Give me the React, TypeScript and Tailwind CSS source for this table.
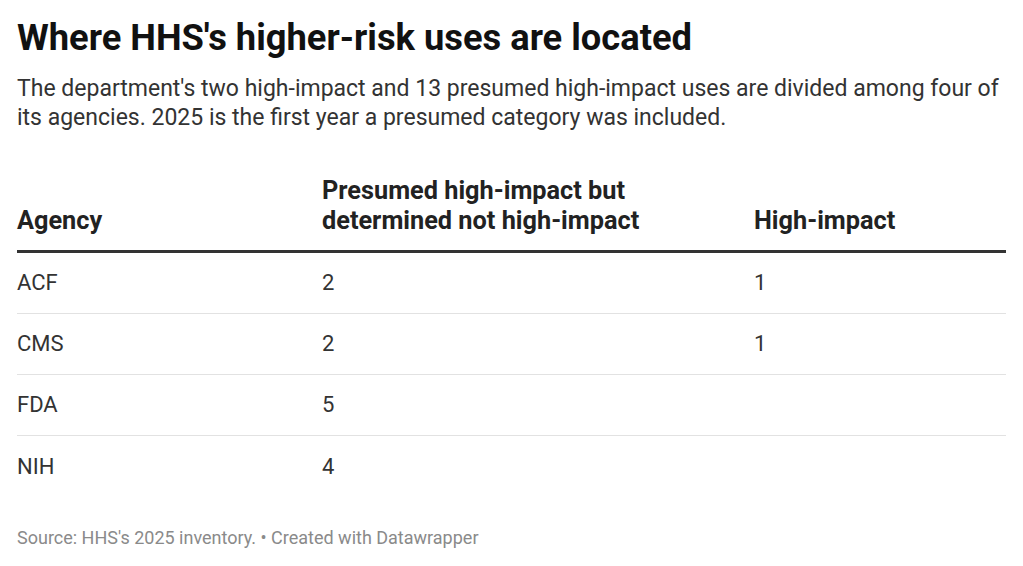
const rows: [string, string, string][] = [
  ["ACF", "2", "1"],
  ["CMS", "2", "1"],
  ["FDA", "5", ""],
  ["NIH", "4", ""],
];

export default function App() {
  return (
    <div className="h-[566px] w-[1023px] bg-white px-[17px] pt-[17px] font-['Roboto',sans-serif] text-[#333333]">
      <h1 className="text-[36.3px] font-bold leading-[42px] text-[#111111]">
        Where HHS's higher-risk uses are located
      </h1>
      <p className="mt-[15px] text-[23px] leading-[29px] text-[#333333]">
        The department's two high-impact and 13 presumed high-impact uses are divided among four of its agencies. 2025 is the first year a presumed category was included.
      </p>

      <div className="mt-[44px]">
        <div className="grid grid-cols-[305px_432px_1fr] items-end border-b-[3px] border-[#333333] pb-[14px] text-[25.3px] font-bold leading-[30px] text-[#222222]">
          <div>Agency</div>
          <div>
            Presumed high-impact but
            <br />
            determined not high-impact
          </div>
          <div>High-impact</div>
        </div>
        {rows.map(([agency, presumed, high], i) => (
          <div
            key={agency}
            className={
              i < rows.length - 1
                ? "grid h-[61px] grid-cols-[305px_432px_1fr] items-center border-b border-[#e2e2e2] text-[22px] leading-[28px]"
                : "grid h-[61px] grid-cols-[305px_432px_1fr] items-center text-[22px] leading-[28px]"
            }
          >
            <div>{agency}</div>
            <div>{presumed}</div>
            <div>{high}</div>
          </div>
        ))}
      </div>

      <p className="mt-[29px] text-[18px] leading-[24px] text-[#8a8a8a]">
        Source: HHS's 2025 inventory. • Created with Datawrapper
      </p>
    </div>
  );
}
